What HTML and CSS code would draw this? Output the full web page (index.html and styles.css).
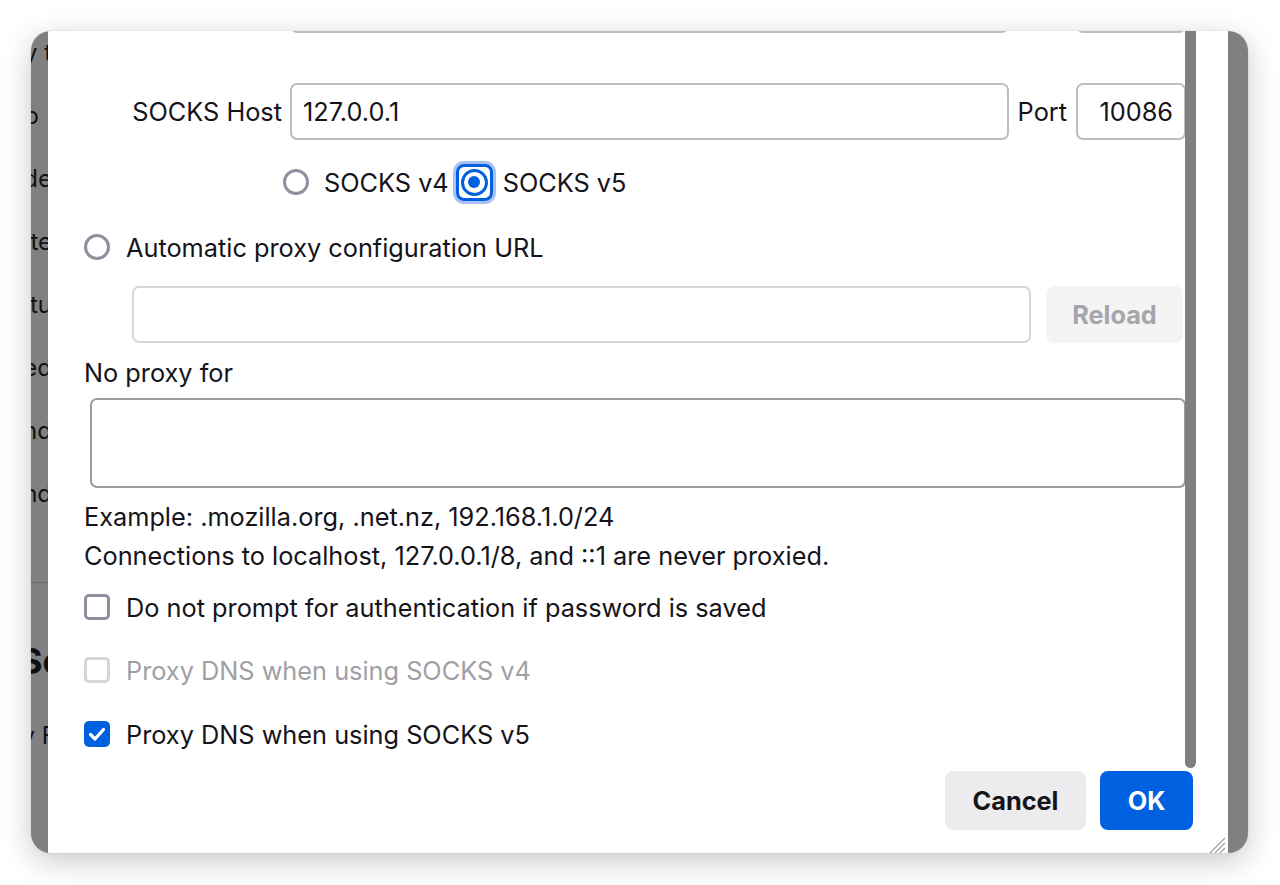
FILE: index.html
```html
<!DOCTYPE html>
<html lang="en">
<head>
<meta charset="utf-8">
<title>Connection Settings</title>
<link rel="stylesheet" href="styles.css">
</head>
<body>
<div class="window">
  <div class="backdrop">
    <div class="bd-line">Always try t</div>
    <div class="bd-line bd-short">Proxy to</div>
    <div class="bd-line">Cookies mode</div>
    <div class="bd-line">Delete</div>
    <div class="bd-line">Startu</div>
    <div class="bd-line">Blocked</div>
    <div class="bd-line">Find</div>
    <div class="bd-line">Send</div>
    <div class="bd-rule"></div>
    <div class="bd-line bd-head">Se</div>
    <div class="bd-line bd-sub">Privacy F</div>
  </div>

  <div class="dialog">
    <div class="content">
      <div class="inner">
        <div class="hostrow">
          <span class="lbl"></span>
          <input class="text-input" type="text" value="">
          <span class="port-lbl">Port</span>
          <input class="text-input port" type="text" value="">
        </div>

        <div class="hostrow host">
          <span class="lbl">SOCKS Host</span>
          <input class="text-input" type="text" value="127.0.0.1">
          <span class="port-lbl">Port</span>
          <input class="text-input port" type="text" value="10086">
        </div>

        <div class="socks">
          <span class="radio"></span>
          <span class="socks-lbl">SOCKS v4</span>
          <span class="focus"><span class="radio checked"><span class="dot"></span></span></span>
          <span class="socks-lbl">SOCKS v5</span>
        </div>

        <div class="opt auto">
          <span class="radio"></span>
          <span>Automatic proxy configuration URL</span>
        </div>

        <div class="urlrow">
          <input class="text-input url" type="text" value="">
          <button class="btn reload" type="button">Reload</button>
        </div>

        <div class="np-label">No proxy for</div>
        <div class="textarea"></div>

        <div class="note example">Example: .mozilla.org, .net.nz, 192.168.1.0/24</div>
        <div class="note conn">Connections to localhost, 127.0.0.1/8, and ::1 are never proxied.</div>

        <div class="opt cb1">
          <span class="cbox"></span>
          <span>Do not prompt for authentication if password is saved</span>
        </div>
        <div class="opt cb2 disabled">
          <span class="cbox"></span>
          <span>Proxy DNS when using SOCKS v4</span>
        </div>
        <div class="opt cb3">
          <span class="cbox checked"><svg width="26" height="26" viewBox="0 0 26 26"><path d="M6.5 13.5 L11 18 L19.5 8.5" fill="none" stroke="#fff" stroke-width="3.2" stroke-linecap="round" stroke-linejoin="round"/></svg></span>
          <span>Proxy DNS when using SOCKS v5</span>
        </div>
      </div>
      <div class="scrollthumb"></div>
    </div>

    <div class="actions">
      <button class="btn cancel" type="button">Cancel</button>
      <button class="btn ok" type="button">OK</button>
    </div>

    <svg class="grip" width="18" height="18" viewBox="0 0 18 18">
      <path d="M18 3 L3 18 M18 8 L8 18 M18 13 L13 18" stroke="#9a9a9a" stroke-width="1.2" fill="none"/>
    </svg>
  </div>
</div>
</body>
</html>
```
FILE: styles.css
```css
* { box-sizing: border-box; }

html, body {
  margin: 0;
  background: #ffffff;
}

body {
  font-family: Inter, "Noto Sans", sans-serif;
  font-size: 25.3px;
  color: #15141a;
  padding: 31px 0 0 31px;
  height: 885px;
  overflow: hidden;
}

.window {
  position: relative;
  width: 1217px;
  height: 822px;
  border-radius: 20px;
  overflow: hidden;
  background: #808080;
  box-shadow: 0 8px 30px rgba(0, 0, 0, 0.22), 0 0 2px rgba(0, 0, 0, 0.12);
}

/* dimmed page behind the dialog */
.backdrop {
  width: 21px;
  margin-top: -10px;
  display: flex;
  flex-direction: column;
}

.bd-line {
  height: 63px;
  display: flex;
  align-items: center;
  justify-content: flex-end;
  white-space: nowrap;
  color: #111;
  font-size: 24px;
}

.bd-short { padding-right: 13px; }

.bd-rule {
  margin-top: 57px;
  height: 1px;
  background: #6c6c6c;
}

.bd-head {
  margin-top: 46px;
  margin-right: -12px;
  font-size: 36px;
  font-weight: 700;
}

.bd-sub {
  height: 30px;
  margin-top: 28px;
  margin-right: -4px;
}

/* dialog */
.dialog {
  position: absolute;
  left: 17px;
  top: 0;
  bottom: 0;
  width: 1180px;
  background: #ffffff;
  display: flex;
  flex-direction: column;
}

.content {
  position: relative;
  flex: 1;
  overflow: hidden;
}

.inner {
  margin-top: -55px;
  padding: 0 42px 0 36px;
  display: flex;
  flex-direction: column;
}

.hostrow {
  display: flex;
  align-items: center;
  height: 57px;
}

.hostrow.host { margin-top: 50px; }

.lbl {
  width: 198px;
  margin-right: 8px;
  text-align: right;
  flex: none;
  white-space: nowrap;
}

.text-input {
  flex: 1;
  min-width: 0;
  height: 57px;
  border: 2px solid #bdbdc2;
  border-radius: 7px;
  padding: 0 11px;
  font: inherit;
  color: inherit;
  background: #fff;
  outline: none;
}

.port-lbl {
  margin: 0 9px;
  flex: none;
}

.text-input.port {
  flex: none;
  width: 110px;
  text-align: right;
}

.socks {
  display: flex;
  align-items: center;
  height: 44px;
  margin-top: 20px;
  padding-left: 199px;
  white-space: nowrap;
}

.radio {
  width: 26px;
  height: 26px;
  border-radius: 50%;
  border: 3px solid #8f8f9d;
  flex: none;
  background: #fff;
  display: flex;
  align-items: center;
  justify-content: center;
}

.socks-lbl { margin-left: 15px; margin-right: 7px; }
.socks .focus + .socks-lbl { margin-left: 10px; }

.focus {
  width: 37px;
  height: 37px;
  border: 3px solid #0061e0;
  border-radius: 8px;
  box-shadow: 0 0 0 3px #a9c0f0;
  display: flex;
  align-items: center;
  justify-content: center;
  flex: none;
}

.radio.checked {
  width: 27px;
  height: 27px;
  border-color: #0061e0;
}

.dot {
  width: 12px;
  height: 12px;
  border-radius: 50%;
  background: #0061e0;
}

.opt {
  display: flex;
  align-items: center;
  height: 30px;
  gap: 16px;
  white-space: nowrap;
}

.auto { margin-top: 28px; }

.urlrow {
  display: flex;
  height: 57px;
  margin-top: 24px;
  padding-left: 48px;
  padding-right: 3px;
  gap: 15px;
}

.text-input.url { border-color: #d6d6da; }

.btn {
  font: inherit;
  font-weight: 700;
  border: none;
  border-radius: 8px;
  height: 59px;
  padding: 0;
  flex: none;
}

.reload {
  width: 137px;
  height: 57px;
  background: #f4f4f5;
  color: #a6a6aa;
}

.np-label {
  margin-top: 15px;
  line-height: 30px;
}

.textarea {
  margin-top: 10px;
  margin-left: 6px;
  height: 90px;
  border: 2px solid #9c9ca0;
  border-radius: 7px;
}

.note { line-height: 30px; white-space: nowrap; }
.example { margin-top: 14px; }
.conn { margin-top: 9px; }

.cbox {
  width: 26px;
  height: 26px;
  border: 3px solid #8f8f9d;
  border-radius: 5px;
  flex: none;
  background: #fff;
}

.cbox.checked {
  border: none;
  background: #0061e0;
  display: block;
}

.cbox svg { display: block; }

.cb1 { margin-top: 21px; }
.cb2 { margin-top: 33px; }
.cb3 { margin-top: 34px; }

.disabled { color: #9f9fa4; }
.disabled .cbox { border-color: #d4d4d9; }

.scrollthumb {
  position: absolute;
  top: 0;
  right: 32px;
  width: 11px;
  height: 737px;
  background: #808080;
  border-radius: 0 0 6px 6px;
}

.actions {
  display: flex;
  justify-content: flex-end;
  gap: 14px;
  padding: 3px 35px 23px 0;
}

.cancel {
  width: 141px;
  background: #ececee;
  color: #15141a;
}

.ok {
  width: 93px;
  background: #0061e0;
  color: #ffffff;
}

.grip {
  position: absolute;
  right: 3px;
  bottom: 0;
}
```
